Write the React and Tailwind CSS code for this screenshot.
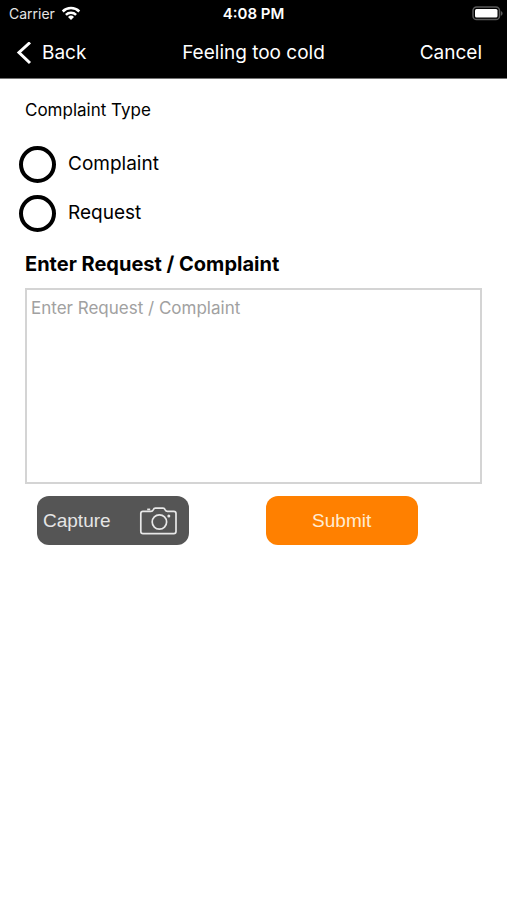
import { useState } from 'react';

const complaintTypes = ['Complaint', 'Request'];

const WifiIcon = () => (
  <svg className="w-5 h-4" viewBox="0 0 20 16" fill="none" stroke="#fff" strokeWidth="2.5" aria-hidden="true">
    <path d="M1.7 5.5a11.8 11.8 0 0 1 16.6 0" />
    <path d="M4.9 8.8a7.2 7.2 0 0 1 10.2 0" />
    <path d="M10 14.1l-3-3.1a4.3 4.3 0 0 1 6 0z" fill="#fff" stroke="none" />
  </svg>
);

const BatteryIcon = () => (
  <svg className="w-8 h-4" viewBox="0 0 32 16" fill="none" aria-hidden="true">
    <rect x="1" y="1" width="26.5" height="12.5" rx="3.6" stroke="#5a5a5a" strokeWidth="1.5" />
    <rect x="3" y="3" width="22.5" height="8.5" rx="1.5" fill="#fff" />
    <path d="M28.8 4.9c2.4.8 2.4 4 0 4.8z" fill="#5a5a5a" />
  </svg>
);

const CameraIcon = () => (
  <svg
    className="w-10 h-8"
    viewBox="0 0 40 32"
    fill="none"
    stroke="#e8e8e8"
    strokeWidth="1.7"
    strokeLinejoin="round"
    aria-hidden="true"
  >
    <path d="M4 5.4h8c1.400 0 1.700-.5 2.200-1.600.5-1.200 1-1.700 2.200-1.700h7.600c1.200 0 1.700.5 2.200 1.700.5 1.100.8 1.600 2.200 1.600h6.400c1.400 0 2.200.8 2.200 2.200v17.900c0 1.400-.8 2.200-2.200 2.200H4c-1.400 0-2.200-.8-2.200-2.200V7.600c0-1.400.8-2.200 2.200-2.200z" />
    <circle cx="20.400" cy="16" r="7.200" />
    <circle cx="29.800" cy="10" r="1.500" fill="#e8e8e8" stroke="none" />
    <path d="M8.200 3.400h3" />
  </svg>
);

export default function App() {
  const [type, setType] = useState('');
  const [details, setDetails] = useState('');

  return (
    <div className="min-h-screen bg-white text-black font-['Inter',sans-serif]">
      <header className="bg-black text-white border-b border-neutral-500">
        <div className="grid grid-cols-[1fr_auto_1fr] items-center h-[27px] px-[9px]">
          <div className="flex items-center gap-1.5 text-[14px] text-neutral-200">
            Carrier
            <WifiIcon />
          </div>
          <div className="text-[15px] leading-5 font-semibold">4:08 PM</div>
          <div className="flex justify-end -mr-1.5">
            <BatteryIcon />
          </div>
        </div>

        <nav className="grid grid-cols-[1fr_auto_1fr] items-center h-[51px] px-4 pt-0.5 text-[19px]">
          <button type="button" className="flex items-center gap-2.5 justify-self-start">
            <svg className="w-4 h-6" viewBox="0 0 16 24" fill="none" stroke="#fff" strokeWidth="3" aria-hidden="true">
              <path d="M14 0.500L3 10.500l11 10.500" />
            </svg>
            Back
          </button>
          <h1 className="whitespace-nowrap">Feeling too cold</h1>
          <button type="button" className="justify-self-end pr-[9px]">Cancel</button>
        </nav>
      </header>

      <form className="px-[25px] pt-[19px]" onSubmit={(e) => e.preventDefault()}>
        <fieldset>
          <legend className="text-[17px] leading-6">Complaint Type</legend>
          <div className="pt-[18px] -ml-1.5">
            {complaintTypes.map((item) => (
              <label key={item} className="flex items-center gap-3 h-[49px] text-[19px]">
                <input
                  type="radio"
                  name="complaintType"
                  value={item}
                  checked={type === item}
                  onChange={() => setType(item)}
                  className="appearance-none shrink-0 w-[37px] h-[37px] rounded-full border-4 border-black checked:bg-black checked:shadow-[inset_0_0_0_5px_#fff]"
                />
                {item}
              </label>
            ))}
          </div>
        </fieldset>

        <label htmlFor="details" className="block pt-3 text-[20px] leading-7 font-bold">
          Enter Request / Complaint
        </label>
        <textarea
          id="details"
          value={details}
          onChange={(e) => setDetails(e.target.value)}
          placeholder="Enter Request / Complaint"
          className="block w-full h-[196px] mt-2.5 px-1 py-1.5 border-2 border-neutral-300 rounded-none resize-none text-[17px] leading-6 placeholder:text-neutral-400"
        />

        <div className="grid grid-cols-2 mt-3 font-['Liberation_Sans',sans-serif] text-[19px]">
          <button
            type="button"
            className="flex items-center justify-between w-2/3 h-[49px] ml-3 pl-1.5 pr-2.5 pt-0.5 rounded-xl bg-[#555] text-neutral-200"
          >
            Capture
            <CameraIcon />
          </button>
          <button type="submit" className="w-2/3 h-[49px] ml-3 pt-0.5 rounded-xl bg-[#ff8000] text-orange-100">
            Submit
          </button>
        </div>
      </form>
    </div>
  );
}
